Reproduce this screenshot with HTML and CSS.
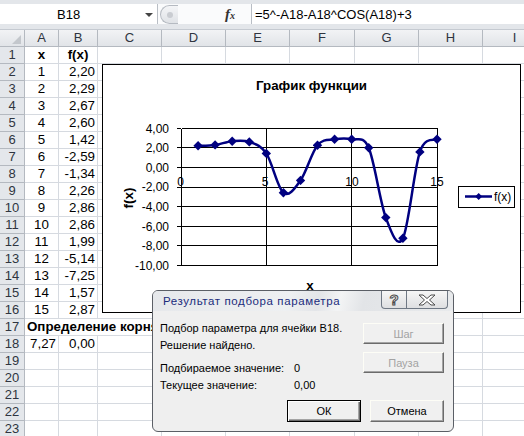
FILE: index.html
```html
<!DOCTYPE html>
<html lang="ru">
<head>
  <meta charset="UTF-8">
  <title>Подбор параметра</title>
  <link rel="stylesheet" href="styles.css">
</head>
<body>
  <div class="app">
    <div class="formula-bar">
      <div class="name-box"><span>B18</span><i class="dropdown"></i></div>
      <div class="fx-zone"><span class="grip"></span><span class="fx">f<small>x</small></span></div>
      <div class="formula">=5^-A18-A18^COS(A18)+3</div>
    </div>

    <div class="sheet">
      <div class="row head">
        <div class="corner"><i></i></div><div>A</div><div>B</div><div>C</div><div>D</div><div>E</div><div>F</div><div>G</div><div>H</div><div>I</div>
      </div>
      <div class="row"><div class="rh">1</div><div class="c mid b">x</div><div class="c mid b">f(x)</div><div class="c"></div><div class="c"></div><div class="c"></div><div class="c"></div><div class="c"></div><div class="c"></div><div class="c"></div></div>
      <div class="row"><div class="rh">2</div><div class="c mid">1</div><div class="c num">2,20</div><div class="c"></div><div class="c"></div><div class="c"></div><div class="c"></div><div class="c"></div><div class="c"></div><div class="c"></div></div>
      <div class="row"><div class="rh">3</div><div class="c mid">2</div><div class="c num">2,29</div><div class="c"></div><div class="c"></div><div class="c"></div><div class="c"></div><div class="c"></div><div class="c"></div><div class="c"></div></div>
      <div class="row"><div class="rh">4</div><div class="c mid">3</div><div class="c num">2,67</div><div class="c"></div><div class="c"></div><div class="c"></div><div class="c"></div><div class="c"></div><div class="c"></div><div class="c"></div></div>
      <div class="row"><div class="rh">5</div><div class="c mid">4</div><div class="c num">2,60</div><div class="c"></div><div class="c"></div><div class="c"></div><div class="c"></div><div class="c"></div><div class="c"></div><div class="c"></div></div>
      <div class="row"><div class="rh">6</div><div class="c mid">5</div><div class="c num">1,42</div><div class="c"></div><div class="c"></div><div class="c"></div><div class="c"></div><div class="c"></div><div class="c"></div><div class="c"></div></div>
      <div class="row"><div class="rh">7</div><div class="c mid">6</div><div class="c num">-2,59</div><div class="c"></div><div class="c"></div><div class="c"></div><div class="c"></div><div class="c"></div><div class="c"></div><div class="c"></div></div>
      <div class="row"><div class="rh">8</div><div class="c mid">7</div><div class="c num">-1,34</div><div class="c"></div><div class="c"></div><div class="c"></div><div class="c"></div><div class="c"></div><div class="c"></div><div class="c"></div></div>
      <div class="row"><div class="rh">9</div><div class="c mid">8</div><div class="c num">2,26</div><div class="c"></div><div class="c"></div><div class="c"></div><div class="c"></div><div class="c"></div><div class="c"></div><div class="c"></div></div>
      <div class="row"><div class="rh">10</div><div class="c mid">9</div><div class="c num">2,86</div><div class="c"></div><div class="c"></div><div class="c"></div><div class="c"></div><div class="c"></div><div class="c"></div><div class="c"></div></div>
      <div class="row"><div class="rh">11</div><div class="c mid">10</div><div class="c num">2,86</div><div class="c"></div><div class="c"></div><div class="c"></div><div class="c"></div><div class="c"></div><div class="c"></div><div class="c"></div></div>
      <div class="row"><div class="rh">12</div><div class="c mid">11</div><div class="c num">1,99</div><div class="c"></div><div class="c"></div><div class="c"></div><div class="c"></div><div class="c"></div><div class="c"></div><div class="c"></div></div>
      <div class="row"><div class="rh">13</div><div class="c mid">12</div><div class="c num">-5,14</div><div class="c"></div><div class="c"></div><div class="c"></div><div class="c"></div><div class="c"></div><div class="c"></div><div class="c"></div></div>
      <div class="row"><div class="rh">14</div><div class="c mid">13</div><div class="c num">-7,25</div><div class="c"></div><div class="c"></div><div class="c"></div><div class="c"></div><div class="c"></div><div class="c"></div><div class="c"></div></div>
      <div class="row"><div class="rh">15</div><div class="c mid">14</div><div class="c num">1,57</div><div class="c"></div><div class="c"></div><div class="c"></div><div class="c"></div><div class="c"></div><div class="c"></div><div class="c"></div></div>
      <div class="row"><div class="rh">16</div><div class="c mid">15</div><div class="c num">2,87</div><div class="c"></div><div class="c"></div><div class="c"></div><div class="c"></div><div class="c"></div><div class="c"></div><div class="c"></div></div>
      <div class="row"><div class="rh">17</div><div class="c b span3">Определение корня</div><div class="c"></div><div class="c"></div><div class="c"></div><div class="c"></div><div class="c"></div><div class="c"></div></div>
      <div class="row"><div class="rh">18</div><div class="c num">7,27</div><div class="c num">0,00</div><div class="c"></div><div class="c"></div><div class="c"></div><div class="c"></div><div class="c"></div><div class="c"></div><div class="c"></div></div>
      <div class="row"><div class="rh">19</div><div class="c"></div><div class="c"></div><div class="c"></div><div class="c"></div><div class="c"></div><div class="c"></div><div class="c"></div><div class="c"></div><div class="c"></div></div>
      <div class="row"><div class="rh">20</div><div class="c"></div><div class="c"></div><div class="c"></div><div class="c"></div><div class="c"></div><div class="c"></div><div class="c"></div><div class="c"></div><div class="c"></div></div>
      <div class="row"><div class="rh">21</div><div class="c"></div><div class="c"></div><div class="c"></div><div class="c"></div><div class="c"></div><div class="c"></div><div class="c"></div><div class="c"></div><div class="c"></div></div>
      <div class="row"><div class="rh">22</div><div class="c"></div><div class="c"></div><div class="c"></div><div class="c"></div><div class="c"></div><div class="c"></div><div class="c"></div><div class="c"></div><div class="c"></div></div>
      <div class="row"><div class="rh">23</div><div class="c"></div><div class="c"></div><div class="c"></div><div class="c"></div><div class="c"></div><div class="c"></div><div class="c"></div><div class="c"></div><div class="c"></div></div>
    </div>

    <!-- chart object floating over the sheet -->
    <div class="chart">
      <svg width="419" height="249" viewBox="0 0 419 249">
        <defs>
          <marker id="dm" markerWidth="10" markerHeight="10" refX="5" refY="5" markerUnits="userSpaceOnUse">
            <path d="M5,0.3 L9.7,5 L5,9.7 L0.3,5Z" fill="#000080"/>
          </marker>
        </defs>
        <rect x="0.5" y="0.5" width="418" height="248" fill="#fff" stroke="#000"/>
        <text class="chart-title" x="209.5" y="26" text-anchor="middle">График функции</text>

        <g stroke="#000" stroke-width="1" fill="none" shape-rendering="crispEdges">
          <path d="M79.5,64.5H335.5 M79.5,83.5H335.5 M79.5,103.5H335.5 M79.5,123.5H335.5 M79.5,142.5H335.5 M79.5,162.5H335.5 M79.5,181.5H335.5 M79.5,201.5H335.5"/>
          <path d="M79.5,64.5V201.5 M164.5,64.5V201.5 M249.5,64.5V201.5 M335.5,64.5V201.5"/>
          <path d="M75,64.5H79 M75,83.5H79 M75,103.5H79 M75,123.5H79 M75,142.5H79 M75,162.5H79 M75,181.5H79 M75,201.5H79"/>
        </g>

        <g class="tick" text-anchor="end">
          <text x="67" y="68.5">4,00</text>
          <text x="67" y="88">2,00</text>
          <text x="67" y="107.5">0,00</text>
          <text x="67" y="127">-2,00</text>
          <text x="67" y="147">-4,00</text>
          <text x="67" y="166.5">-6,00</text>
          <text x="67" y="186">-8,00</text>
          <text x="67" y="205.5">-10,00</text>
        </g>
        <g class="tick" text-anchor="middle">
          <text x="78.5" y="121.5">0</text>
          <text x="163" y="121.5">5</text>
          <text x="250" y="121.5">10</text>
          <text x="335" y="121.5">15</text>
        </g>

        <path d="M96.1,81.8 C98.95,81.65 107.41,81.67 113.1,80.9 C118.79,80.13 124.51,77.7 130.2,77.2 C135.89,76.7 141.61,75.87 147.3,77.9 C152.99,79.93 158.61,80.93 164.3,89.4 C169.99,97.87 175.71,124.2 181.4,128.7 C187.09,133.2 192.81,124.32 198.5,116.4 C204.19,108.48 209.81,88.05 215.5,81.2 C221.19,74.35 226.91,76.28 232.6,75.3 C238.29,74.32 244.01,73.88 249.7,75.3 C255.39,76.72 261.01,70.75 266.7,83.8 C272.39,96.85 278.11,138.52 283.8,153.6 C289.49,168.68 295.21,185.25 300.9,174.3 C306.59,163.35 312.21,104.42 317.9,87.9 C323.59,71.38 332.15,77.32 335,75.2"
              fill="none" stroke="#000080" stroke-width="2.5" stroke-linejoin="round"
              marker-start="url(#dm)" marker-mid="url(#dm)" marker-end="url(#dm)"/>

        <text class="axis-title" x="26" y="134" text-anchor="middle" transform="rotate(-90 26 134) translate(0 5)">f(x)</text>
        <text class="axis-title" x="208" y="226" text-anchor="middle">x</text>

        <rect x="356.5" y="122.5" width="56" height="21" fill="#fff" stroke="#000" shape-rendering="crispEdges"/>
        <path d="M363,132.5H390" stroke="#000080" stroke-width="2.5"/>
        <path d="M376.7,129 L380.2,132.5 L376.7,136 L373.2,132.5Z" fill="#000080"/>
        <text class="tick" x="392" y="137">f(x)</text>
      </svg>
    </div>

    <!-- goal seek dialog -->
    <div class="dialog">
      <div class="dlg-title">
        <span class="dlg-caption">Результат подбора параметра</span>
        <div class="dlg-ctrls">
          <span class="help">?</span>
          <span class="close">
            <svg width="20" height="12" viewBox="0 0 20 12">
              <path d="M2,1 H6 L10,4.5 L14,1 H18 L12.5,6 L18,11 H14 L10,7.5 L6,11 H2 L7.5,6Z" fill="#fff" stroke="#4a4a4a" stroke-width="1" stroke-linejoin="round"/>
            </svg>
          </span>
        </div>
      </div>
      <div class="dlg-body">
        <div class="dlg-main">
          <div class="dlg-text">
            <p>Подбор параметра для ячейки B18.</p>
            <p>Решение найдено.</p>
            <p class="gap"><span class="lbl">Подбираемое значение:</span>0</p>
            <p><span class="lbl">Текущее значение:</span>0,00</p>
          </div>
          <div class="dlg-side">
            <button class="btn wide" disabled>Шаг</button>
            <button class="btn wide" disabled>Пауза</button>
          </div>
        </div>
        <div class="dlg-foot">
          <button class="btn default">ОК</button>
          <button class="btn">Отмена</button>
        </div>
      </div>
    </div>
  </div>
</body>
</html>
```

FILE: styles.css
```css
* {
  margin: 0;
  padding: 0;
  box-sizing: border-box;
}
body {
  width: 524px;
  height: 436px;
  overflow: hidden;
  background: #fff;
  font-family: "Liberation Sans", Arial, sans-serif;
  color: #000;
}
.app {
  position: relative;
  width: 524px;
  height: 436px;
  overflow: hidden;
}

/* formula bar */
.formula-bar {
  display: flex;
  height: 30px;
  padding: 4px 0 5px;
  background: #e3e6ea;
  border-bottom: 1px solid #c5cad1;
}
.name-box {
  position: relative;
  width: 158px;
  background: #fff;
  border-right: 1px solid #b9bec5;
  font-size: 13px;
  line-height: 21px;
  padding-left: 57px;
}
.dropdown {
  position: absolute;
  left: 145px;
  top: 9px;
  border-left: 4px solid transparent;
  border-right: 4px solid transparent;
  border-top: 4px solid #444;
}
.fx-zone {
  position: relative;
  width: 93px;
  background: #fafbfc;
}
.grip {
  position: absolute;
  left: 2px;
  top: 1px;
  width: 18px;
  height: 19px;
  border: 1px solid #b5bac1;
  border-right: none;
  border-radius: 10px 0 0 10px;
  background: linear-gradient(#f4f5f7, #dfe2e6);
}
.grip::after {
  content: "";
  position: absolute;
  left: 6px;
  top: 6px;
  width: 6px;
  height: 6px;
  border-radius: 50%;
  background: #c9ccd1;
}
.fx {
  position: absolute;
  left: 67px;
  top: 2px;
  font-family: "Liberation Serif", serif;
  font-style: italic;
  font-weight: bold;
  font-size: 15px;
  color: #333;
}
.fx small {
  font-size: 10px;
}
.formula {
  flex: 1;
  background: #fff;
  border-left: 1px solid #b9bec5;
  font-size: 13px;
  line-height: 21px;
  padding-left: 3px;
  white-space: nowrap;
}

/* sheet grid */
.row {
  display: grid;
  grid-template-columns: 25px 34px 39px 64px 64px 64px 65px 64px 64px 64px;
  height: 17px;
}
.row > div {
  border-right: 1px solid #d6dae0;
  border-bottom: 1px solid #d6dae0;
  font-size: 13.33px;
  line-height: 16px;
  white-space: nowrap;
  overflow: hidden;
}
.row.head > div,
.row > .rh {
  background: linear-gradient(#f2f3f5, #e1e4e8);
  border-right: 1px solid #b4b9c0;
  border-bottom: 1px solid #b4b9c0;
  color: #2f3540;
  text-align: center;
  font-size: 13px;
}
.row > .rh {
  background: #e4e7eb;
}
.row.head .corner {
  position: relative;
}
.corner i {
  position: absolute;
  right: 3px;
  bottom: 2px;
  border-left: 9px solid transparent;
  border-bottom: 9px solid #c3c7cc;
}
.c.mid {
  text-align: center;
}
.c.num {
  text-align: right;
  padding-right: 2px;
}
.c.b {
  font-weight: bold;
}
.c.span3 {
  grid-column: span 3;
  padding-left: 2px;
}

/* chart */
.chart {
  position: absolute;
  left: 102px;
  top: 64px;
  width: 419px;
  height: 249px;
}
.chart svg {
  display: block;
}
.chart-title {
  font-family: "Liberation Sans", Arial, sans-serif;
  font-weight: bold;
  font-size: 13.33px;
}
.axis-title {
  font-family: "Liberation Sans", Arial, sans-serif;
  font-weight: bold;
  font-size: 13.33px;
}
.tick {
  font-family: "Liberation Sans", Arial, sans-serif;
  font-size: 12px;
}

/* dialog */
.dialog {
  position: absolute;
  left: 152px;
  top: 290px;
  width: 302px;
  height: 142px;
  border: 1px solid #5b5f66;
  border-radius: 6px;
  background: #efefef;
  display: flex;
  flex-direction: column;
  overflow: hidden;
  font-size: 11px;
}
.dlg-title {
  display: flex;
  height: 20px;
  padding-left: 10px;
  padding-right: 5px;
  background: linear-gradient(105deg, #e6e8eb 0, #eef0f2 45%, #e3e5e8 55%, #f3f4f5 62%, #e2e4e7 70%, #e8eaec 100%);
}
.dlg-caption {
  color: #202c7c;
  font-size: 11.5px;
  letter-spacing: 0.6px;
  line-height: 20px;
}
.dlg-ctrls {
  display: flex;
  margin-left: auto;
  height: 18px;
  border: 1px solid #6f7884;
  border-top: none;
  border-radius: 0 0 4px 4px;
  background: linear-gradient(#f6f6f6, #dedfe1);
  overflow: hidden;
}
.dlg-ctrls .help {
  width: 25px;
  border-right: 1px solid #6f7884;
  text-align: center;
  font-weight: bold;
  font-size: 15px;
  line-height: 17px;
  color: #fff;
  -webkit-text-stroke: 1px #4a4a4a;
}
.dlg-ctrls .close {
  width: 40px;
  display: flex;
  align-items: center;
  justify-content: center;
}
.dlg-body {
  flex: 1;
  display: flex;
  flex-direction: column;
  padding: 9px 9px 9px 7px;
}
.dlg-main {
  display: flex;
}
.dlg-text {
  flex: 1;
}
.dlg-text p {
  line-height: 17px;
  white-space: nowrap;
}
.dlg-text p.gap {
  margin-top: 6px;
}
.lbl {
  display: inline-block;
  width: 134px;
}
.dlg-side {
  display: flex;
  flex-direction: column;
  gap: 8px;
  padding-top: 3px;
}
.btn {
  width: 74px;
  height: 21px;
  font-family: "Liberation Sans", Arial, sans-serif;
  font-size: 11px;
  color: #000;
  background: #f0f0f0;
  border: 1px solid;
  border-color: #fdfdf6 #6b6b6b #6b6b6b #fdfdf6;
  box-shadow: inset -1px -1px #a4a4a4;
}
.btn.wide {
  width: 81px;
}
.btn:disabled {
  color: #a3a3a3;
}
.btn.default {
  border: 1px solid #000;
  box-shadow: inset 1px 1px #fff, inset -1px -1px #6b6b6b, inset -2px -2px #a4a4a4;
}
.dlg-foot {
  display: flex;
  justify-content: flex-end;
  gap: 9px;
  margin-top: auto;
  height: 22px;
}
.dlg-foot .btn {
  height: 22px;
}
```
